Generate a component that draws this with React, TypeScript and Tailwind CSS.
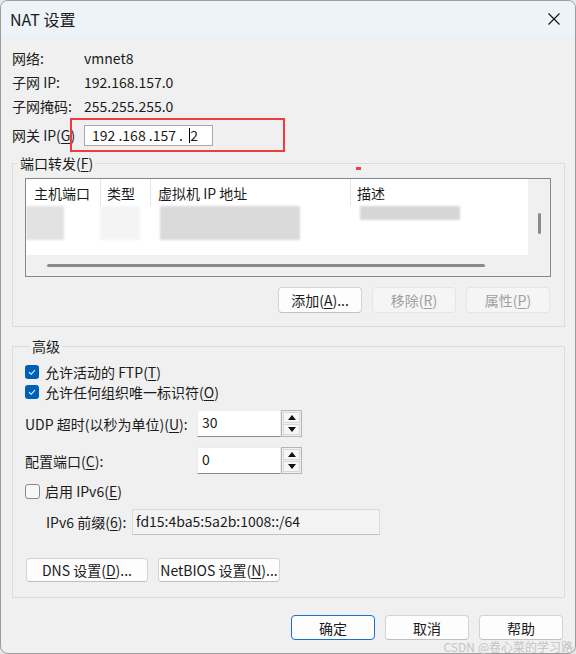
import { ReactNode } from "react";

const Key = ({ k }: { k: string }) => (
  <>
    (<u className="underline underline-offset-2 decoration-1">{k}</u>)
  </>
);

const Btn = ({
  children,
  w = "w-[84px]",
  h = "h-[26px]",
  disabled = false,
  primary = false,
}: {
  children: ReactNode;
  w?: string;
  h?: string;
  disabled?: boolean;
  primary?: boolean;
}) => (
  <div
    className={[
      "flex items-center justify-center rounded-[4px] border leading-[16px]",
      w,
      h,
      disabled
        ? "bg-[#f5f5f5] border-[#e5e5e5] text-[#a0a0a0]"
        : primary
        ? "bg-[#fdfdfd] border-[#1a6fc9] text-[#1b1b1b]"
        : "bg-[#fdfdfd] border-[#d3d3d3] border-b-[#c0c0c0] text-[#1b1b1b]",
    ].join(" ")}
  >
    {children}
  </div>
);

const Check = ({ checked }: { checked: boolean }) =>
  checked ? (
    <div className="w-[14px] h-[14px] rounded-[3px] bg-[#005fb8] flex items-center justify-center">
      <svg width="10" height="10" viewBox="0 0 10 10">
        <path d="M2 5.2 L4.2 7.3 L8 3" fill="none" stroke="white" strokeWidth="1.1" />
      </svg>
    </div>
  ) : (
    <div className="w-[15px] h-[15px] rounded-[3px] border border-[#8a8a8a] bg-[#f7f7f7]" />
  );

const Spin = ({ value }: { value: string }) => (
  <div className="flex">
    <div className="w-[84px] h-[27px] bg-white border border-[#ececec] border-b-[#8a8a8a] pl-[4px] pt-[3px] leading-[16px]">
      {value}
    </div>
    <div className="w-[21px] h-[27px] border border-[#b4b4b4] bg-[#f0f0f0] flex flex-col p-px gap-px">
      <div className="flex-1 border border-[#d8d8d8] bg-[#f6f6f6] flex items-center justify-center">
        <svg width="8" height="5" viewBox="0 0 8 5">
          <path d="M0 5 L4 0 L8 5 Z" fill="#111" />
        </svg>
      </div>
      <div className="flex-1 border border-[#d8d8d8] bg-[#f6f6f6] flex items-center justify-center">
        <svg width="8" height="5" viewBox="0 0 8 5">
          <path d="M0 0 L8 0 L4 5 Z" fill="#111" />
        </svg>
      </div>
    </div>
  </div>
);

const App = () => {
  return (
    <div className="relative w-[576px] h-[654px] bg-[#e6e6e6] font-['Noto_Sans_CJK_SC','Noto_Sans',sans-serif] text-[14px] text-[#1b1b1b]">
      <div className="w-full h-full rounded-[8px] border border-[#9c9c9c] overflow-hidden bg-[#f0f0f0] flex flex-col">
        {/* title bar */}
        <div className="h-[36px] shrink-0 bg-[#edf3f8] flex items-center justify-between pl-[9px] pr-[15px]">
          <span className="text-[16px] leading-[20px]">NAT 设置</span>
          <svg width="12" height="12" viewBox="0 0 12 12">
            <path d="M0.5 0.5 L11.5 11.5 M11.5 0.5 L0.5 11.5" stroke="#111" strokeWidth="1.1" />
          </svg>
        </div>

        <div className="pt-[9px] pl-[11px] flex flex-col">
          {[
            ["网络:", "vmnet8"],
            ["子网 IP:", "192.168.157.0"],
            ["子网掩码:", "255.255.255.0"],
          ].map(([l, v]) => (
            <div key={l} className="h-[24px] flex items-center leading-[16px]">
              <span className="w-[72px]">{l}</span>
              <span>{v}</span>
            </div>
          ))}

          <div className="h-[34px] flex items-center leading-[16px]">
            <span className="w-[58px] shrink-0 whitespace-nowrap">
              网关 IP<Key k="G" />
            </span>
            <div className="w-[215px] h-[34px] shrink-0 border-2 border-[#ee3b3b] flex items-center pl-[12px]">
              <div className="w-[129px] h-[21px] bg-white border border-[#a8a8a8] flex items-center pl-[7px]">
                <span className="whitespace-pre">192 .168 .157 .  </span>
                <span className="w-px h-[15px] bg-black" />
                <span>2</span>
              </div>
            </div>
          </div>

          {/* port forwarding */}
          <fieldset className="mt-[3px] w-[553px] border border-[#dcdcdc] pb-[13px]">
            <legend className="ml-[5px] px-[2px] leading-[16px]">
              端口转发<Key k="F" />
            </legend>
            <div className="mt-[7px] ml-[12px] w-[526px] h-[99px] border border-[#828790] bg-[#f0f0f0] grid grid-cols-[1fr_22px] grid-rows-[1fr_21px]">
              <div className="bg-white relative overflow-hidden">
                <div className="h-[27px] flex leading-[16px] text-[14px]">
                  <div className="w-[75px] pl-[8px] flex items-center border-r border-[#e5e5e5]">主机端口</div>
                  <div className="w-[50px] pl-[6px] flex items-center border-r border-[#e5e5e5]">类型</div>
                  <div className="w-[200px] pl-[7px] flex items-center border-r border-[#e5e5e5]">虚拟机 IP 地址</div>
                  <div className="pl-[6px] flex items-center">描述</div>
                </div>
                {/* blurred rows */}
                <div className="flex blur-[1px]">
                  <div className="w-[38px] h-[34px] bg-[#e2e2e2]" />
                  <div className="w-[40px] h-[34px] bg-[#f4f4f4] ml-[36px]" />
                  <div className="w-[140px] h-[34px] bg-[#dadada] ml-[20px]" />
                  <div className="w-[100px] h-[14px] bg-[#d6d6d6] ml-[60px]" />
                </div>
              </div>
              <div className="flex justify-center pt-[34px]">
                <div className="w-[3px] h-[21px] rounded-full bg-[#8a8a8a]" />
              </div>
              <div className="flex items-center pl-[21px]">
                <div className="w-[438px] h-[3px] rounded-full bg-[#8a8a8a]" />
              </div>
              <div />
            </div>
            <div className="mt-[10px] pr-[14px] flex justify-end gap-[10px]">
              <Btn>
                添加<Key k="A" />...
              </Btn>
              <Btn disabled>
                移除<Key k="R" />
              </Btn>
              <Btn disabled>
                属性<Key k="P" />
              </Btn>
            </div>
          </fieldset>

          {/* advanced */}
          <fieldset className="mt-[11px] w-[553px] border border-[#dcdcdc] pb-[15px] pl-[12px]">
            <legend className="ml-[5px] px-[2px] leading-[16px]">高级</legend>
            <div className="mt-[8px] h-[20px] flex items-center gap-[6px] leading-[16px]">
              <Check checked />
              <span>
                允许活动的 FTP<Key k="T" />
              </span>
            </div>
            <div className="h-[20px] flex items-center gap-[6px] leading-[16px]">
              <Check checked />
              <span>
                允许任何组织唯一标识符<Key k="O" />
              </span>
            </div>
            <div className="mt-[8px] flex items-center leading-[16px]">
              <span className="w-[172px]">
                UDP 超时(以秒为单位)<Key k="U" />:
              </span>
              <Spin value="30" />
            </div>
            <div className="mt-[10px] flex items-center leading-[16px]">
              <span className="w-[172px]">
                配置端口<Key k="C" />:
              </span>
              <Spin value="0" />
            </div>
            <div className="mt-[8px] h-[18px] flex items-center gap-[5px] leading-[16px]">
              <Check checked={false} />
              <span>
                启用 IPv6<Key k="E" />
              </span>
            </div>
            <div className="mt-[9px] flex items-center leading-[16px] pl-[21px]">
              <span className="w-[86px]">
                IPv6 前缀<Key k="6" />:
              </span>
              <div className="w-[248px] h-[26px] bg-[#f3f3f3] border border-[#dadada] border-b-[#c4c4c4] pl-[3px] pt-[3px]">
                fd15:4ba5:5a2b:1008::/64
              </div>
            </div>
            <div className="mt-[23px] pl-[1px] flex gap-[10px]">
              <Btn w="w-[122px]" h="h-[24px]">
                DNS 设置<Key k="D" />...
              </Btn>
              <Btn w="w-[122px]" h="h-[24px]">
                NetBIOS 设置<Key k="N" />...
              </Btn>
            </div>
          </fieldset>

          <div className="mt-[17px] pr-[12px] flex justify-end gap-[10px]">
            <Btn h="h-[25px]" primary>
              确定
            </Btn>
            <Btn h="h-[25px]">取消</Btn>
            <Btn h="h-[25px]">帮助</Btn>
          </div>
        </div>
      </div>

      {/* annotation mark and watermark */}
      <div className="absolute left-[356px] top-[167px] w-[5px] h-[3px] bg-[#f04040]" />
      <div className="absolute right-[3px] bottom-[-1px] text-[12px] leading-[16px] text-[#c4c4c4]">
        CSDN @卷心菜的学习路
      </div>
    </div>
  );
};

export default App;
